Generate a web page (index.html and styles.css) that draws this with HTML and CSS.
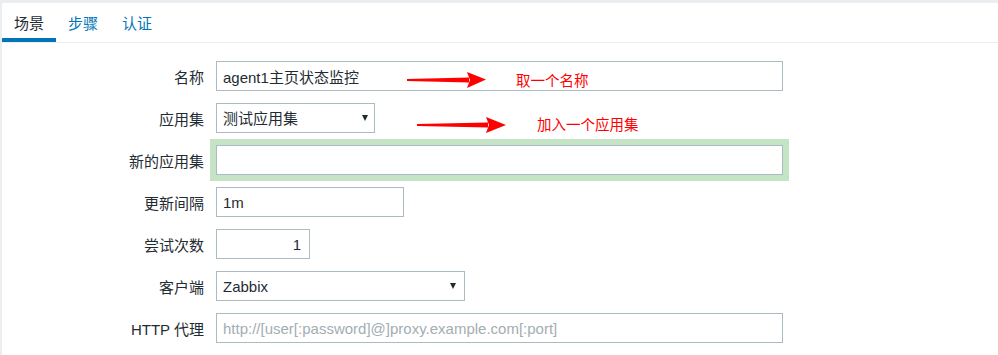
FILE: index.html
```html
<!DOCTYPE html>
<html lang="zh-CN">
<head>
    <meta charset="UTF-8">
    <meta name="viewport" content="width=device-width, initial-scale=1.0">
    <title>Web 场景</title>
    <link rel="stylesheet" href="styles.css">
</head>
<body>
    <div id="page">
        <!-- Tabs -->
        <ul class="tabs">
            <li class="tab active">场景</li>
            <li class="tab">步骤</li>
            <li class="tab">认证</li>
        </ul>

        <form class="form">
            <div class="row">
                <label class="label">名称</label>
                <input class="field wide" type="text" value="agent1主页状态监控">
            </div>
            <div class="row">
                <label class="label">应用集</label>
                <span class="selectWrap app">
                    <select class="field"><option>测试应用集</option></select>
                </span>
            </div>
            <div class="row">
                <label class="label">新的应用集</label>
                <input class="field wide focused" type="text">
            </div>
            <div class="row">
                <label class="label">更新间隔</label>
                <input class="field interval" type="text" value="1m">
            </div>
            <div class="row">
                <label class="label">尝试次数</label>
                <input class="field attempts" type="text" value="1">
            </div>
            <div class="row">
                <label class="label">客户端</label>
                <span class="selectWrap agent">
                    <select class="field"><option>Zabbix</option></select>
                </span>
            </div>
            <div class="row">
                <label class="label">HTTP 代理</label>
                <input class="field wide" type="text" placeholder="http://[user[:password]@]proxy.example.com[:port]">
            </div>

            <!-- Annotations drawn over the form -->
            <svg class="arrow arrow1" width="80" height="16" viewBox="0 0 80 16">
                <polygon points="0,7 62,5.5 62,10.5 0,9" fill="#ff0000"/>
                <polygon points="60,0 79,7.5 60,16 63,8" fill="#ff0000"/>
            </svg>
            <span class="note note1">取一个名称</span>

            <svg class="arrow arrow2" width="90" height="16" viewBox="0 0 90 16">
                <polygon points="0,7 71,5.5 71,10.5 0,9" fill="#ff0000"/>
                <polygon points="69,0 89,8 69,16 72,8" fill="#ff0000"/>
            </svg>
            <span class="note note2">加入一个应用集</span>
        </form>
    </div>
</body>
</html>
```

FILE: styles.css
```css
/* Reset */
html, body, div, span, ul, li, form, label {
    margin: 0;
    padding: 0;
    border: 0;
}
*, *:before, *:after {
    box-sizing: border-box;
}
body {
    background-color: #ebeef0;
    font-family: "Liberation Sans", Arial, "Noto Sans CJK SC", sans-serif;
    font-size: 15px;
    color: #1f2c33;
    overflow: hidden;
}

#page {
    margin: 3px 0 0 2px;
    min-height: 352px;
    background-color: #fff;
}

/* Tabs */
.tabs {
    display: flex;
    list-style: none;
    border-bottom: 1px solid #ebeef0;
}
.tab {
    padding: 6px 12px 0;
    line-height: 29px;
    border-bottom: 4px solid transparent;
    color: #0275b8;
    cursor: pointer;
}
.tab.active {
    color: #1f2c33;
    border-bottom-color: #0275b8;
}

/* Form */
.form {
    position: relative;
    padding-top: 18px;
}
.row {
    display: flex;
    align-items: center;
    height: 30px;
    margin-bottom: 12px;
}
.label {
    flex: 0 0 214px;
    padding-right: 12px;
    text-align: right;
}
.field {
    height: 30px;
    padding: 0 6px;
    border: 1px solid #acbbc2;
    border-radius: 0;
    background-color: #fff;
    font-family: inherit;
    font-size: 15px;
    color: #1f2c33;
    outline: none;
}
.field::placeholder {
    color: #a3adb2;
}
.wide {
    width: 567px;
}
.interval {
    width: 188px;
}
.attempts {
    width: 94px;
    text-align: right;
    padding-right: 8px;
}
.focused {
    box-shadow: 0 0 0 6px #c5e4c6;
}

/* Selects */
.selectWrap {
    position: relative;
    display: inline-block;
}
.selectWrap select {
    -webkit-appearance: none;
    appearance: none;
    width: 100%;
    padding-right: 24px;
}
.selectWrap:after {
    content: "";
    position: absolute;
    top: 12px;
    right: 9px;
    border-left: 3.5px solid transparent;
    border-right: 3.5px solid transparent;
    border-top: 6px solid #1f2c33;
    pointer-events: none;
}
.selectWrap.app {
    width: 159px;
}
.selectWrap.app:after {
    right: 7px;
}
.selectWrap.agent {
    width: 249px;
}

/* Annotations */
.arrow {
    position: absolute;
    display: block;
}
.arrow1 {
    left: 405px;
    top: 29px;
}
.arrow2 {
    left: 415px;
    top: 74px;
}
.note {
    position: absolute;
    font-size: 14.5px;
    line-height: 20px;
    color: #ff0000;
    white-space: nowrap;
}
.note1 {
    left: 514px;
    top: 28px;
}
.note2 {
    left: 535px;
    top: 72px;
}
```
